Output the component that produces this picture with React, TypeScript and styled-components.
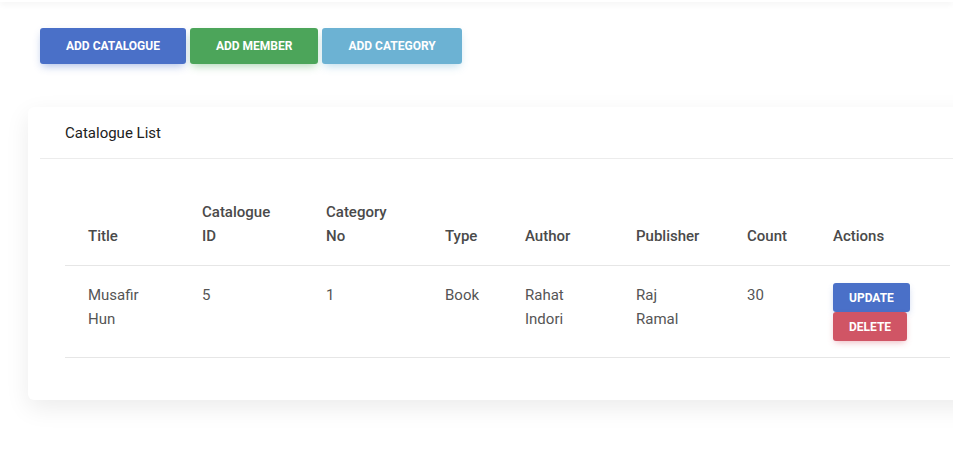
import styled, { createGlobalStyle } from 'styled-components';

const GlobalStyle = createGlobalStyle`
  html {
    overflow: hidden;
  }
  body {
    margin: 0;
    background: #ffffff;
    font-family: Roboto, "Liberation Sans", Arial, sans-serif;
    color: #495057;
  }
`;

type Variant = 'blue' | 'green' | 'sky' | 'red';

const palette: Record<Variant, { bg: string; shadow: string }> = {
  blue: { bg: '#4a70c8', shadow: 'rgba(74, 112, 200, 0.45)' },
  green: { bg: '#4ca55a', shadow: 'rgba(76, 165, 90, 0.45)' },
  sky: { bg: '#6cb2d3', shadow: 'rgba(108, 178, 211, 0.45)' },
  red: { bg: '#d05565', shadow: 'rgba(208, 85, 101, 0.45)' },
};

const catalogues = [
  {
    id: 5,
    title: 'Musafir Hun',
    categoryNo: 1,
    type: 'Book',
    author: 'Rahat Indori',
    publisher: 'Raj Ramal',
    count: 30,
  },
];

const columns = [
  { label: 'Title', width: 114 },
  { label: 'Catalogue ID', width: 124 },
  { label: 'Category No', width: 119 },
  { label: 'Type', width: 80 },
  { label: 'Author', width: 111 },
  { label: 'Publisher', width: 111 },
  { label: 'Count', width: 86 },
  { label: 'Actions', width: 140 },
];

export default function App() {
  return (
    <>
      <GlobalStyle />
      <Topbar />
      <Page>
        <Toolbar>
          <ActionButton $variant="blue">Add Catalogue</ActionButton>
          <ActionButton $variant="green">Add Member</ActionButton>
          <ActionButton $variant="sky">Add Category</ActionButton>
        </Toolbar>
        <Card>
          <CardHeader>Catalogue List</CardHeader>
          <CardBody>
            <Table>
              <colgroup>
                {columns.map(col => (
                  <col key={col.label} style={{ width: col.width }} />
                ))}
              </colgroup>
              <thead>
                <tr>
                  {columns.map(col => (
                    <Th key={col.label}>{col.label}</Th>
                  ))}
                </tr>
              </thead>
              <tbody>
                {catalogues.map(item => (
                  <tr key={item.id}>
                    <Td>{item.title}</Td>
                    <Td>{item.id}</Td>
                    <Td>{item.categoryNo}</Td>
                    <Td>{item.type}</Td>
                    <Td>{item.author}</Td>
                    <Td>{item.publisher}</Td>
                    <Td>{item.count}</Td>
                    <Td>
                      <RowActions>
                        <SmallButton $variant="blue">Update</SmallButton>
                        <SmallButton $variant="red">Delete</SmallButton>
                      </RowActions>
                    </Td>
                  </tr>
                ))}
              </tbody>
            </Table>
          </CardBody>
        </Card>
      </Page>
    </>
  );
}

const Topbar = styled.div`
  height: 2px;
  background: #ffffff;
  box-shadow: 0 1px 6px rgba(0, 0, 0, 0.12);
`;

const Page = styled.div`
  padding: 26px 0 60px 28px;
`;

const Toolbar = styled.div`
  display: flex;
  gap: 4px;
  margin-left: 12px;
`;

const ActionButton = styled.button<{ $variant: Variant }>`
  height: 36px;
  padding: 0 26px;
  border: none;
  border-radius: 3px;
  background: ${p => palette[p.$variant].bg};
  box-shadow: 0 4px 9px -2px ${p => palette[p.$variant].shadow};
  color: #ffffff;
  font-family: Roboto, "Liberation Sans", Arial, sans-serif;
  font-size: 12px;
  font-weight: 700;
  text-transform: uppercase;
  cursor: pointer;
`;

const Card = styled.div`
  width: 1000px;
  margin-top: 43px;
  padding-bottom: 42px;
  background: #ffffff;
  border-radius: 6px;
  box-shadow: 0 8px 24px rgba(0, 0, 0, 0.08);
`;

const CardHeader = styled.div`
  margin: 0 12px;
  padding: 16px 25px 15px;
  border-bottom: 1px solid #ececec;
  color: #212121;
  font-size: 15px;
  line-height: 20px;
`;

const CardBody = styled.div`
  padding: 29px 0 0 37px;
`;

const Table = styled.table`
  border-collapse: collapse;
  table-layout: fixed;
  width: 885px;
  font-size: 15px;
  line-height: 24px;
`;

const Th = styled.th`
  padding: 12px 23px 17px;
  text-align: left;
  vertical-align: bottom;
  font-weight: 500;
  color: #4a4a4a;
  border-bottom: 1px solid #e6e6e6;
`;

const Td = styled.td`
  padding: 17px 23px 16px;
  vertical-align: top;
  color: #555555;
  border-bottom: 1px solid #e6e6e6;
`;

const RowActions = styled.div`
  display: flex;
  flex-direction: column;
  align-items: flex-start;
`;

const SmallButton = styled.button<{ $variant: Variant }>`
  height: 29px;
  padding: 0 16px;
  border: none;
  border-radius: 3px;
  background: ${p => palette[p.$variant].bg};
  box-shadow: 0 3px 7px -2px ${p => palette[p.$variant].shadow};
  color: #ffffff;
  font-family: Roboto, "Liberation Sans", Arial, sans-serif;
  font-size: 12px;
  font-weight: 700;
  text-transform: uppercase;
  cursor: pointer;
`;
